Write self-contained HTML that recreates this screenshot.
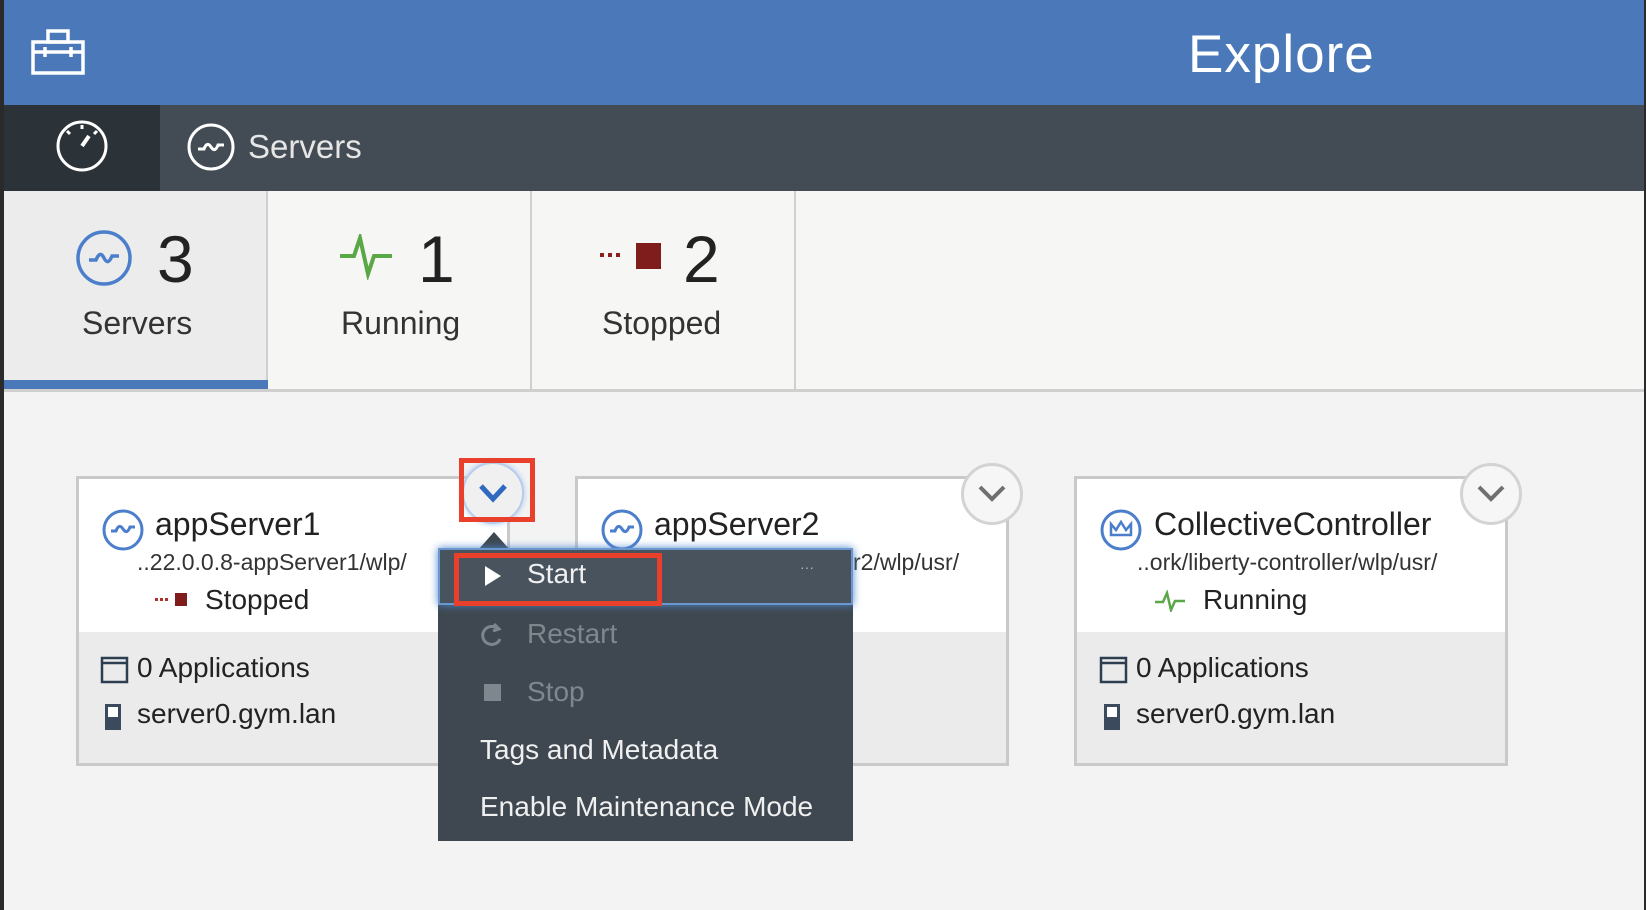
<!DOCTYPE html>
<html><head><meta charset="utf-8"><style>
*{margin:0;padding:0;box-sizing:border-box}
body{width:1646px;height:910px;overflow:hidden;background:#f3f3f3;font-family:"Liberation Sans",sans-serif;position:relative}
.a{position:absolute}
.t{position:absolute;white-space:nowrap;line-height:1}
</style></head><body>
<div class="a" style="left:0;top:0;width:4px;height:910px;background:#2a2a2a"></div>
<div class="a" style="right:0;top:0;width:2px;height:910px;background:#2a2a2a"></div>
<!-- header -->
<div class="a" style="left:4px;top:0;width:1640px;height:105px;background:#4b78b9"></div>
<svg class="a" style="left:30px;top:28px" width="56" height="48" viewBox="0 0 56 48" fill="none" stroke="#fff" stroke-width="3.5">
<rect x="3" y="14" width="50" height="31"/><rect x="18" y="3" width="20" height="11"/><line x1="3" y1="24" x2="53" y2="24"/><line x1="15" y1="19" x2="15" y2="29"/><line x1="41" y1="19" x2="41" y2="29"/></svg>
<div class="t" style="left:1188px;top:28px;font-size:53px;letter-spacing:1px;color:#fff">Explore</div>
<!-- nav -->
<div class="a" style="left:4px;top:105px;width:1640px;height:86px;background:#434c54"></div>
<div class="a" style="left:4px;top:105px;width:156px;height:86px;background:#2c3338"></div>
<svg class="a" style="left:54px;top:118px" width="56" height="56" viewBox="0 0 56 56" fill="none" stroke="#fff" stroke-width="3"><circle cx="28" cy="28" r="24"/><line x1="28" y1="28" x2="35" y2="18" stroke-width="4"/><line x1="28" y1="7" x2="28" y2="11"/><line x1="13" y1="13" x2="16" y2="16"/><line x1="43" y1="13" x2="40" y2="16"/></svg>
<svg class="a" style="left:186px;top:122px" width="50" height="50" viewBox="0 0 50 50" fill="none" stroke="#fff" stroke-width="3"><circle cx="25" cy="25" r="22"/><path d="M12 27 h6 q3 -8 7 -2 q4 6 7 -2 h6"/></svg>
<div class="t" style="left:248px;top:130px;font-size:33px;color:#e6e6e6">Servers</div>
<!-- stats -->
<div class="a" style="left:4px;top:191px;width:1640px;height:201px;background:#f6f6f4;border-bottom:3px solid #cfcfcf"></div>
<div class="a" style="left:4px;top:191px;width:264px;height:198px;background:#ececec;border-right:2px solid #cfcfcf"></div>
<div class="a" style="left:4px;top:380px;width:264px;height:9px;background:#4b78b9"></div>
<div class="a" style="left:530px;top:191px;width:2px;height:198px;background:#cfcfcf"></div>
<div class="a" style="left:794px;top:191px;width:2px;height:198px;background:#cfcfcf"></div>
<svg class="a" style="left:74px;top:228px" width="60" height="60" viewBox="0 0 60 60" fill="none" stroke="#4b7ecb" stroke-width="3.5"><circle cx="30" cy="30" r="26"/><path d="M15 32 h7 q4 -10 8 -2 q4 8 8 -2 h7"/></svg>
<div class="t" style="left:157px;top:226px;font-size:66px;color:#222">3</div>
<div class="t" style="left:82px;top:307px;font-size:32px;color:#333">Servers</div>
<svg class="a" style="left:338px;top:234px" width="58" height="46" viewBox="0 0 58 46" fill="none" stroke="#5aa845" stroke-width="4"><path d="M2 22 h14 l6 -18 l8 36 l6 -18 h18"/></svg>
<div class="t" style="left:418px;top:226px;font-size:66px;color:#222">1</div>
<div class="t" style="left:341px;top:307px;font-size:32px;color:#333">Running</div>
<svg class="a" style="left:600px;top:240px" width="62" height="30"><rect x="0" y="13" width="4" height="4" fill="#8b1e1e"/><rect x="8" y="13" width="4" height="4" fill="#8b1e1e"/><rect x="16" y="13" width="4" height="4" fill="#8b1e1e"/><rect x="36" y="3" width="25" height="26" fill="#7f1d1d"/></svg>
<div class="t" style="left:683px;top:226px;font-size:66px;color:#222">2</div>
<div class="t" style="left:602px;top:307px;font-size:32px;color:#333">Stopped</div>
<!-- cards -->
<div class="a" style="left:76px;top:476px;width:434px;height:290px;background:#ebebeb;border:3px solid #c9c9c9"><div style="height:153px;background:#fff"></div></div>
<div class="a" style="left:575px;top:476px;width:434px;height:290px;background:#ebebeb;border:3px solid #c9c9c9"><div style="height:153px;background:#fff"></div></div>
<div class="a" style="left:1074px;top:476px;width:434px;height:290px;background:#ebebeb;border:3px solid #c9c9c9"><div style="height:153px;background:#fff"></div></div>
<!-- chevrons -->
<div class="a" style="left:462px;top:462px;width:62px;height:62px;border-radius:50%;background:#f0f0f0;border:2px solid #b8cdea;box-shadow:0 0 6px #a9c4ee"></div>
<svg class="a" style="left:477px;top:482px" width="32" height="22" fill="none" stroke="#2f6ac0" stroke-width="5"><path d="M4 4 l12 13 l12 -13"/></svg>
<div class="a" style="left:961px;top:463px;width:62px;height:62px;border-radius:50%;background:#f6f6f6;border:3px solid #d3d3d3"></div>
<svg class="a" style="left:976px;top:483px" width="32" height="22" fill="none" stroke="#707070" stroke-width="4"><path d="M4 4 l12 12 l12 -12"/></svg>
<div class="a" style="left:1460px;top:463px;width:62px;height:62px;border-radius:50%;background:#f6f6f6;border:3px solid #d3d3d3"></div>
<svg class="a" style="left:1475px;top:483px" width="32" height="22" fill="none" stroke="#707070" stroke-width="4"><path d="M4 4 l12 12 l12 -12"/></svg>
<!-- card1 -->
<svg class="a" style="left:101px;top:508px" width="44" height="44" fill="none" stroke="#4b7ecb" stroke-width="3"><circle cx="22" cy="22" r="19"/><path d="M10 23 h5 q3 -8 7 -2 q4 6 7 -2 h5"/></svg>
<div class="t" style="left:155px;top:508px;font-size:32px;color:#222">appServer1</div>
<div class="t" style="left:137px;top:551px;font-size:23px;color:#333">..22.0.0.8-appServer1/wlp/</div>
<svg class="a" style="left:155px;top:592px" width="34" height="16"><rect x="0" y="6" width="3" height="3" fill="#b03030"/><rect x="5" y="6" width="3" height="3" fill="#b03030"/><rect x="10" y="6" width="3" height="3" fill="#b03030"/><rect x="20" y="1" width="12" height="13" fill="#7f1d1d"/></svg>
<div class="t" style="left:205px;top:586px;font-size:28px;color:#222">Stopped</div>
<svg class="a" style="left:100px;top:656px" width="29" height="28" fill="none" stroke="#2c3e50" stroke-width="2.5"><rect x="2" y="2" width="25" height="24"/><line x1="2" y1="7" x2="27" y2="7"/></svg>
<div class="t" style="left:137px;top:654px;font-size:28px;color:#222">0 Applications</div>
<svg class="a" style="left:104px;top:703px" width="18" height="28"><rect x="1" y="1" width="16" height="26" fill="#3b4a5c"/><rect x="4" y="4" width="10" height="10" fill="#fff"/></svg>
<div class="t" style="left:137px;top:700px;font-size:28px;color:#222">server0.gym.lan</div>
<!-- card2 -->
<svg class="a" style="left:600px;top:508px" width="44" height="44" fill="none" stroke="#4b7ecb" stroke-width="3"><circle cx="22" cy="22" r="19"/><path d="M10 23 h5 q3 -8 7 -2 q4 6 7 -2 h5"/></svg>
<div class="t" style="left:654px;top:508px;font-size:32px;color:#222">appServer2</div>
<div class="t" style="left:853px;top:551px;font-size:23px;color:#333">r2/wlp/usr/</div>
<!-- card3 -->
<svg class="a" style="left:1099px;top:508px" width="44" height="44" fill="none" stroke="#4b7ecb" stroke-width="3"><circle cx="22" cy="22" r="19"/><path d="M12 16 l5 6 l5 -8 l5 8 l5 -6 v11 h-20 z" stroke-width="2.5"/></svg>
<div class="t" style="left:1154px;top:508px;font-size:32px;color:#222">CollectiveController</div>
<div class="t" style="left:1137px;top:551px;font-size:23px;color:#333">..ork/liberty-controller/wlp/usr/</div>
<svg class="a" style="left:1154px;top:590px" width="32" height="22" fill="none" stroke="#5aa845" stroke-width="2.5"><path d="M1 12 h8 l4 -9 l4 17 l4 -9 h10"/></svg>
<div class="t" style="left:1203px;top:586px;font-size:28px;color:#222">Running</div>
<svg class="a" style="left:1099px;top:656px" width="29" height="28" fill="none" stroke="#2c3e50" stroke-width="2.5"><rect x="2" y="2" width="25" height="24"/><line x1="2" y1="7" x2="27" y2="7"/></svg>
<div class="t" style="left:1136px;top:654px;font-size:28px;color:#222">0 Applications</div>
<svg class="a" style="left:1103px;top:703px" width="18" height="28"><rect x="1" y="1" width="16" height="26" fill="#3b4a5c"/><rect x="4" y="4" width="10" height="10" fill="#fff"/></svg>
<div class="t" style="left:1136px;top:700px;font-size:28px;color:#222">server0.gym.lan</div>
<!-- menu -->
<svg class="a" style="left:478px;top:530px" width="32" height="20"><path d="M0 20 L16 2 L32 20 Z" fill="#3d474f"/></svg>
<div class="a" style="left:438px;top:548px;width:415px;height:293px;background:#3f4850"></div>
<div class="a" style="left:438px;top:548px;width:415px;height:57px;background:#48535e;border:2px solid #6a97cf;box-shadow:0 0 8px #4f86cf"></div>
<svg class="a" style="left:483px;top:565px" width="20" height="22"><path d="M2 1 L18 11 L2 21 Z" fill="#fff"/></svg>
<div class="t" style="left:527px;top:560px;font-size:28px;color:#f0f0f0">Start</div>
<div class="t" style="left:800px;top:560px;font-size:14px;color:#bbb">···</div>
<svg class="a" style="left:481px;top:621px" width="24" height="28" fill="none" stroke="#7d868e" stroke-width="3"><path d="M17 8 A9 9 0 1 0 19 18"/><path d="M13 3 l5 5 l-6 2" /></svg>
<div class="t" style="left:527px;top:620px;font-size:28px;color:#7f878e">Restart</div>
<div class="a" style="left:484px;top:684px;width:17px;height:17px;background:#7f878e"></div>
<div class="t" style="left:527px;top:678px;font-size:28px;color:#7f878e">Stop</div>
<div class="t" style="left:480px;top:736px;font-size:28px;color:#f0f0f0">Tags and Metadata</div>
<div class="t" style="left:480px;top:793px;font-size:28px;color:#f0f0f0">Enable Maintenance Mode</div>
<!-- red boxes -->
<div class="a" style="left:459px;top:458px;width:76px;height:64px;border:5px solid #e8402a"></div>
<div class="a" style="left:454px;top:553px;width:208px;height:53px;border:5px solid #e8402a"></div>
</body></html>
